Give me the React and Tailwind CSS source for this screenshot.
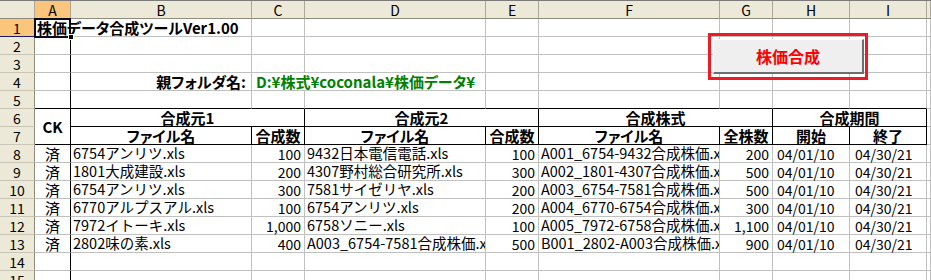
import React from 'react';

const GRID =
  'grid grid-cols-[35px_36px_181px_53px_181px_53px_181px_53px_77px_77px_1fr] auto-rows-[18px]';

const cols = ['A', 'B', 'C', 'D', 'E', 'F', 'G', 'H', 'I', ''];

const rows = [
  ['6754アンリツ.xls', '100', '9432日本電信電話.xls', '100', 'A001_6754-9432合成株価.xls', '200'],
  ['1801大成建設.xls', '200', '4307野村総合研究所.xls', '300', 'A002_1801-4307合成株価.xls', '500'],
  ['6754アンリツ.xls', '300', '7581サイゼリヤ.xls', '200', 'A003_6754-7581合成株価.xls', '500'],
  ['6770アルプスアル.xls', '100', '6754アンリツ.xls', '200', 'A004_6770-6754合成株価.xls', '300'],
  ['7972イトーキ.xls', '1,000', '6758ソニー.xls', '100', 'A005_7972-6758合成株価.xls', '1,100'],
  ['2802味の素.xls', '400', 'A003_6754-7581合成株価.xls', '500', 'B001_2802-A003合成株価.xls', '900'],
];

const HEAD = "font-bold text-[15px] [font-feature-settings:'palt']";

function Cell({ r = false, b = false, className = '', children }) {
  return (
    <div
      className={`relative flex items-center min-w-0 whitespace-nowrap border-r border-b ${
        r ? 'border-r-black' : 'border-r-[#c0c0c0]'
      } ${b ? 'border-b-black' : 'border-b-[#c0c0c0]'} ${className}`}
    >
      {children}
    </div>
  );
}

function RowHead({ n, active = false }) {
  return (
    <div
      className={`flex items-center justify-center border-r border-b border-r-[#8f8c7d] ${
        active ? 'bg-[#fbc57b] border-b-[#1a1a6e]' : 'bg-[#ece9d8] border-b-[#c8c5b5]'
      }`}
    >
      {n}
    </div>
  );
}

function Blank({ n }) {
  return (
    <>
      <RowHead n={n} />
      <Cell r />
      {[...Array(8)].map((_, i) => (
        <Cell key={i} />
      ))}
      <Cell />
    </>
  );
}

export default function App() {
  return (
    <div className="relative w-[931px] h-[280px] overflow-hidden bg-white border-t border-t-[#7a7a7a] text-[14px] text-black font-['Noto_Sans_CJK_JP',sans-serif] leading-none">
      <div className={GRID}>
        {/* column headers */}
        <div className="bg-[#ece9d8] border-r border-b border-r-[#aca899] border-b-[#8f8c7d]" />
        {cols.map((c, i) => (
          <div
            key={i}
            className={`flex items-center justify-center border-r border-b border-r-[#aca899] border-b-[#8f8c7d] ${
              c === 'A' ? 'bg-[#fbc57b]' : 'bg-[#ece9d8]'
            }`}
          >
            {c}
          </div>
        ))}

        {/* row 1 */}
        <RowHead n={1} active />
        <Cell r className="overflow-visible z-10">
          <div className="absolute -left-px -top-px w-[37px] h-[20px] border-2 border-[#0a0a1e]" />
          <div className="absolute left-[33px] top-[15px] w-[6px] h-[6px] bg-black border border-white" />
          <span className={`pl-[2px] ${HEAD}`}>株価データ合成ツールVer1.00</span>
        </Cell>
        {[...Array(8)].map((_, i) => (
          <Cell key={i} />
        ))}
        <Cell />

        <Blank n={2} />
        <Blank n={3} />

        {/* row 4 */}
        <RowHead n={4} />
        <Cell r />
        <Cell className={`justify-end pr-[5px] ${HEAD}`}>親フォルダ名:</Cell>
        <Cell className={`col-span-2 pl-[4px] text-[#008000] ${HEAD}`}>D:¥株式¥coconala¥株価データ¥</Cell>
        {[...Array(5)].map((_, i) => (
          <Cell key={i} />
        ))}
        <Cell />

        {/* row 5 */}
        <RowHead n={5} />
        <Cell r b />
        {[...Array(8)].map((_, i) => (
          <Cell key={i} b />
        ))}
        <Cell />

        {/* rows 6-7 table header */}
        <RowHead n={6} />
        <Cell r b className={`row-span-2 justify-center ${HEAD}`}>CK</Cell>
        <Cell r b className={`col-span-2 justify-center ${HEAD}`}>合成元1</Cell>
        <Cell r b className={`col-span-2 justify-center ${HEAD}`}>合成元2</Cell>
        <Cell r b className={`col-span-2 justify-center ${HEAD}`}>合成株式</Cell>
        <Cell r b className={`col-span-2 justify-center ${HEAD}`}>合成期間</Cell>
        <Cell />

        <RowHead n={7} />
        {['ファイル名', '合成数', 'ファイル名', '合成数', 'ファイル名', '全株数', '開始', '終了'].map((t, i) => (
          <Cell key={i} r b className={`justify-center ${HEAD}`}>
            {t}
          </Cell>
        ))}
        <Cell />

        {/* data rows */}
        {rows.map((r, i) => (
          <React.Fragment key={i}>
            <RowHead n={8 + i} />
            <Cell r className="justify-center text-[15px]">済</Cell>
            <Cell className="pl-[2px] overflow-x-clip text-[14.5px]">{r[0]}</Cell>
            <Cell className="justify-end pr-[3px]">{r[1]}</Cell>
            <Cell className="pl-[2px] overflow-x-clip text-[14.5px]">{r[2]}</Cell>
            <Cell className="justify-end pr-[3px]">{r[3]}</Cell>
            <Cell className="pl-[2px] overflow-x-clip text-[14.5px]">{r[4]}</Cell>
            <Cell className="justify-end pr-[3px]">{r[5]}</Cell>
            <Cell className="pl-[4px]">04/01/10</Cell>
            <Cell className="pl-[5px]">04/30/21</Cell>
            <Cell />
          </React.Fragment>
        ))}

        <Blank n={14} />
        <Blank n={15} />
      </div>

      {/* macro button */}
      <div className="absolute left-[708px] top-[32px] w-[160px] h-[47px] border-[3px] border-[#ed1c24] pt-[3px] pl-[2px] pr-[1px] pb-[3px]">
        <div className={`w-full h-full flex items-center justify-center bg-[#efefef] border-t border-l border-t-white border-l-white border-r-2 border-b-2 border-r-[#6e6e6e] border-b-[#6e6e6e] text-[#ff0000] ${HEAD} text-[16px]`}>
          株価合成
        </div>
      </div>
    </div>
  );
}
